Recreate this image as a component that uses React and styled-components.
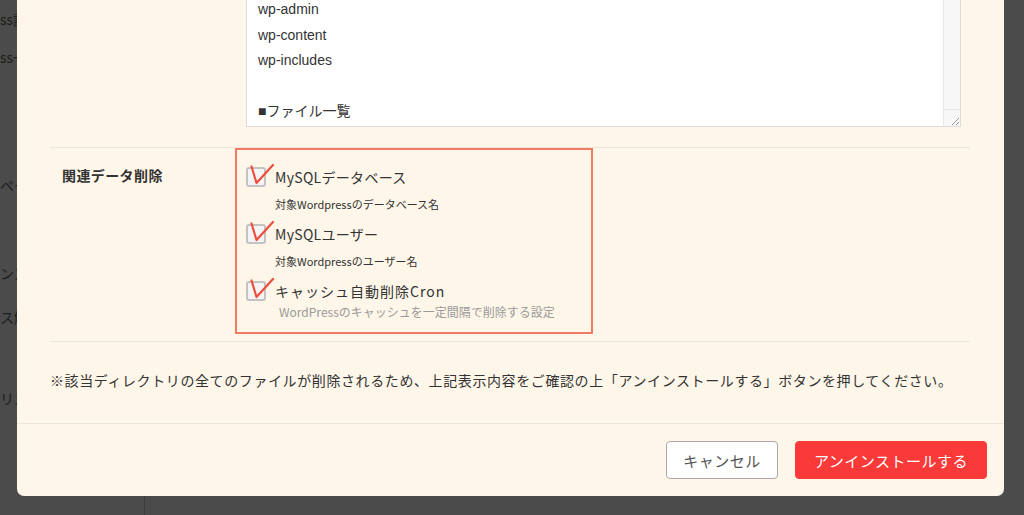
import React from 'react';
import styled, { createGlobalStyle } from 'styled-components';

const GlobalStyle = createGlobalStyle`
  html, body {
    margin: 0;
    padding: 0;
    background: #4b4b4b;
    overflow: hidden;
  }
  body {
    font-family: "Noto Sans CJK JP", "Noto Sans", sans-serif;
    color: #333;
  }
`;

// Page under the overlay
const Page = styled.div`
  position: relative;
  height: 515px;
  display: flex;
  overflow: hidden;
`;

const Sidebar = styled.div`
  width: 144px;
  height: 100%;
  border-right: 1px solid #3d3d3d;
  display: flex;
  flex-direction: column;
`;

const SideItem = styled.div`
  margin-top: ${p => p.$top}px;
  height: 20px;
  line-height: 20px;
  font-size: 14px;
  color: #1e1e1e;
  white-space: nowrap;
`;

// Modal
const Modal = styled.div`
  position: absolute;
  left: 17px;
  right: 20px;
  bottom: 19px;
  background: #fef6e8;
  border-radius: 0 0 7px 7px;
  display: flex;
  flex-direction: column;
`;

const Body = styled.div`
  padding: 0 34px 0 33px;
`;

const TextareaSection = styled.div`
  padding: 0 9px 20px 196px;
  border-bottom: 1px solid #ede6d9;
`;

const Textarea = styled.div`
  display: flex;
  background: #fff;
  border: 1px solid #dcdcdc;
  border-top: none;
`;

const TextLines = styled.div`
  flex: 1;
  padding: 0 11px 1px;
  font-family: "Liberation Sans", "Noto Sans CJK JP", sans-serif;
  font-size: 14px;
  color: #333;
`;

const Line = styled.div`
  height: 25.6px;
  line-height: 25.6px;
  white-space: nowrap;
`;

const Scrollbar = styled.div`
  width: 16px;
  display: flex;
  flex-direction: column;
  background: #f7f7f7;
  border-left: 1px solid #e6e6e6;
`;

const Track = styled.div`
  flex: 1;
`;

const Corner = styled.div`
  height: 16px;
  border-top: 1px solid #e6e6e6;
  display: flex;
  align-items: flex-end;
  justify-content: flex-end;
`;

const Row = styled.div`
  display: flex;
  padding-bottom: 7px;
  border-bottom: 1px solid #ede6d9;
`;

const Label = styled.div`
  width: 173px;
  padding: 17px 0 0 12px;
  font-size: 14px;
  font-weight: 700;
  letter-spacing: 0.4px;
  color: #333;
  line-height: 20px;
`;

const Highlight = styled.div`
  box-sizing: border-box;
  width: 358px;
  border: 2px solid #ef7b64;
  padding: 16px 0 11px 9px;
`;

const CheckRow = styled.div`
  display: flex;
  align-items: center;
  gap: 9px;
  height: 22px;
  margin-bottom: ${p => p.$gap}px;
`;

const CheckWrap = styled.div`
  position: relative;
  width: 20px;
  height: 20px;
  flex: none;
`;

const Box = styled.div`
  width: 16px;
  height: 16px;
  border: 2px solid #c3c3c3;
  border-radius: 3px;
  background: #f4f4f4;
`;

const Mark = styled.svg`
  position: absolute;
  left: 0;
  top: -4px;
  overflow: visible;
`;

const CheckText = styled.span`
  font-size: 14px;
  color: #333;
  letter-spacing: ${p => p.$spacing || 0.3}px;
`;

const Sub = styled.div`
  padding-left: 29px;
  font-size: 11px;
  line-height: 16px;
  color: #333;
  margin-bottom: 11px;
`;

const Desc = styled.div`
  padding-left: 33px;
  font-size: 12px;
  line-height: 18px;
  color: #9a9a9a;
`;

const Note = styled.div`
  padding: 28px 0 33px;
  font-size: 14px;
  line-height: 20px;
  letter-spacing: 0.6px;
  color: #333;
  white-space: nowrap;
`;

const Footer = styled.div`
  border-top: 1px solid #ebe5da;
  padding: 17px 17px;
  display: flex;
  justify-content: flex-end;
  gap: 17px;
`;

const Button = styled.button`
  height: 38px;
  width: ${p => p.$width}px;
  border-radius: 4px;
  font-family: "Noto Sans CJK JP", sans-serif;
  font-size: 15px;
  letter-spacing: 0.5px;
  cursor: pointer;
  background: ${p => (p.$primary ? '#fa3939' : '#fff')};
  color: ${p => (p.$primary ? '#fff' : '#555')};
  border: 1px solid ${p => (p.$primary ? '#fa3939' : '#a9a9a9')};
`;

function Check() {
  return (
    <CheckWrap>
      <Box />
      <Mark width="28" height="22" viewBox="0 0 28 22">
        <path
          d="M5.5 3.5 L10.5 20 L27 2"
          fill="none"
          stroke="#ee4e3c"
          strokeWidth="2.2"
          strokeLinecap="round"
          strokeLinejoin="round"
        />
      </Mark>
    </CheckWrap>
  );
}

const sideItems = [
  { text: 'ss設定', top: 9 },
  { text: 'ss一覧', top: 18 },
  { text: 'ページ', top: 108 },
  { text: 'ンストール', top: 68 },
  { text: 'ス解析', top: 24 },
  { text: 'リスト', top: 61 },
];

const lines = ['', 'wp-admin', 'wp-content', 'wp-includes', '', '■ファイル一覧'];

function App() {
  return (
    <>
      <GlobalStyle />
      <Page>
        <Sidebar>
          {sideItems.map((s, i) => (
            <SideItem key={i} $top={s.top}>{s.text}</SideItem>
          ))}
        </Sidebar>

        <Modal>
          <Body>
            <TextareaSection>
              <Textarea>
                <TextLines>
                  {lines.map((l, i) => (
                    <Line key={i}>{l || '\u00a0'}</Line>
                  ))}
                </TextLines>
                <Scrollbar>
                  <Track />
                  <Corner>
                    <svg width="12" height="12" viewBox="0 0 12 12">
                      <path d="M11 4 L4 11 M11 8 L8 11" stroke="#999" strokeWidth="1" />
                    </svg>
                  </Corner>
                </Scrollbar>
              </Textarea>
            </TextareaSection>

            <Row>
              <Label>関連データ削除</Label>
              <Highlight>
                <CheckRow $gap={8}>
                  <Check />
                  <CheckText>MySQLデータベース</CheckText>
                </CheckRow>
                <Sub>対象Wordpressのデータベース名</Sub>
                <CheckRow $gap={8}>
                  <Check />
                  <CheckText>MySQLユーザー</CheckText>
                </CheckRow>
                <Sub>対象Wordpressのユーザー名</Sub>
                <CheckRow $gap={1}>
                  <Check />
                  <CheckText $spacing={1}>キャッシュ自動削除Cron</CheckText>
                </CheckRow>
                <Desc>WordPressのキャッシュを一定間隔で削除する設定</Desc>
              </Highlight>
            </Row>

            <Note>
              ※該当ディレクトリの全てのファイルが削除されるため、上記表示内容をご確認の上「アンインストールする」ボタンを押してください。
            </Note>
          </Body>

          <Footer>
            <Button $width={112}>キャンセル</Button>
            <Button $primary $width={192}>アンインストールする</Button>
          </Footer>
        </Modal>
      </Page>
    </>
  );
}

export default App;
